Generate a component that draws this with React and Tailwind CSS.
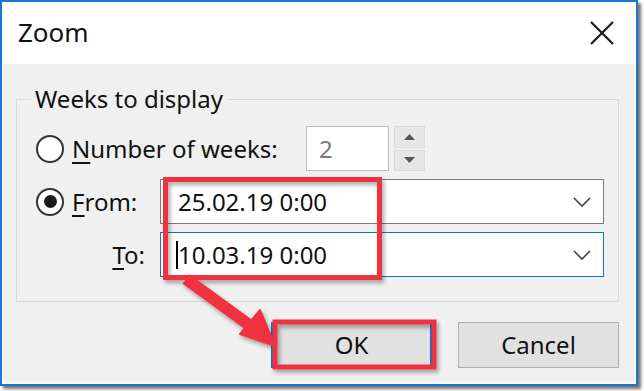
import React from 'react';

// small chevron used by the date combo boxes
function Chevron() {
  return (
    <svg width="20" height="12" viewBox="0 0 20 12" className="shrink-0">
      <polyline points="2,2 10,10 18,2" fill="none" stroke="#444" strokeWidth="1.6" />
    </svg>
  );
}

function Radio({ checked }) {
  return (
    <div className="w-[28px] h-[28px] rounded-full border-2 border-[#333] bg-white flex items-center justify-center shrink-0">
      {checked ? <div className="w-[13px] h-[13px] rounded-full bg-[#1a1a1a]" /> : null}
    </div>
  );
}

function Combo({ value, focused, caret }) {
  return (
    <div
      className={`flex-1 h-[45px] bg-white flex items-center pl-[17px] pr-[11px] border ${
        focused ? 'border-[#0078d7]' : 'border-[#7a7a7a]'
      }`}
    >
      {caret ? <div className="w-[2px] h-[28px] bg-black -ml-[2px]" /> : null}
      <span className="flex-1 text-[24px] leading-none text-[#111]">{value}</span>
      <Chevron />
    </div>
  );
}

export default function App() {
  return (
    <div className="w-[644px] h-[391px] bg-white relative" style={{ fontFamily: '"Noto Sans", "Open Sans", sans-serif' }}>
      {/* dialog window */}
      <div className="w-[638px] h-[386px] border-2 border-[#1979d2] bg-white flex flex-col pl-[1px] pr-[2px] pb-[2px] shadow-[3px_3px_3px_rgba(0,0,0,0.55)]">
        {/* title bar */}
        <div className="h-[62px] flex items-center justify-between pl-[15px] pr-[20px] shrink-0">
          <span className="text-[26px] text-[#111] leading-none -mt-[2px]">Zoom</span>
          <svg width="24" height="24" viewBox="0 0 24 24">
            <path d="M1 1 L23 23 M23 1 L1 23" stroke="#1a1a1a" strokeWidth="2.2" />
          </svg>
        </div>

        {/* body */}
        <div className="flex-1 bg-[#f0f0f0] flex flex-col pt-[22px] pl-[13px] pr-[15px]">
          <fieldset className="border border-[#d9d9d9]">
            <legend className="ml-[14px] px-[4px] text-[24px] leading-[26px] text-[#111]">Weeks to display</legend>
            <div className="flex flex-col gap-[8px] pt-[14px] pl-[19px] pr-[14px] pb-[24px]">
              {/* number of weeks */}
              <div className="flex items-center h-[45px]">
                <Radio />
                <span className="ml-[8px] w-[234px] text-[24px] leading-none text-[#111]">
                  <span className="underline underline-offset-[4px]">N</span>umber of weeks:
                </span>
                <div className="w-[83px] h-[45px] bg-white border border-[#bcbcbc] flex items-center pl-[12px] text-[24px] leading-none text-[#7a7a7a]">
                  2
                </div>
                <div className="ml-[5px] w-[31px] h-[45px] flex flex-col gap-[2px]">
                  <div className="flex-1 bg-[#e6e6e6] border border-[#dadada] flex items-center justify-center">
                    <svg width="11" height="6" viewBox="0 0 11 6"><polygon points="0,6 11,6 5.5,0" fill="#555" /></svg>
                  </div>
                  <div className="flex-1 bg-[#e6e6e6] border border-[#dadada] flex items-center justify-center">
                    <svg width="11" height="6" viewBox="0 0 11 6"><polygon points="0,0 11,0 5.5,6" fill="#555" /></svg>
                  </div>
                </div>
              </div>

              {/* from */}
              <div className="flex items-center h-[45px]">
                <div className="w-[124px] flex items-center shrink-0">
                  <Radio checked />
                  <span className="ml-[8px] text-[24px] leading-none text-[#111]">
                    <span className="underline underline-offset-[4px]">F</span>rom:
                  </span>
                </div>
                <Combo value="25.02.19 0:00" />
              </div>

              {/* to */}
              <div className="flex items-center h-[45px]">
                <div className="w-[124px] flex justify-end pr-[15px] shrink-0">
                  <span className="text-[24px] leading-none text-[#111]">
                    <span className="underline underline-offset-[4px]">T</span>o:
                  </span>
                </div>
                <Combo value="10.03.19 0:00" focused caret />
              </div>
            </div>
          </fieldset>

          {/* buttons */}
          <div className="flex justify-end gap-[26px] mt-[20px]">
            <div className="w-[161px] h-[46px] bg-[#e1e1e1] border-2 border-[#0078d7] flex items-center justify-center text-[24px] leading-none text-[#111]">
              OK
            </div>
            <div className="w-[161px] h-[46px] bg-[#e1e1e1] border border-[#adadad] flex items-center justify-center text-[24px] leading-none text-[#111]">
              Cancel
            </div>
          </div>
        </div>
      </div>

      {/* red annotation overlay */}
      <svg className="absolute left-0 top-0 pointer-events-none" width="644" height="391" viewBox="0 0 644 391">
        <defs>
          <filter id="shadow" x="-20%" y="-20%" width="140%" height="140%">
            <feDropShadow dx="2" dy="3" stdDeviation="2" floodColor="#000" floodOpacity="0.35" />
          </filter>
        </defs>
        <g filter="url(#shadow)" fill="none" stroke="#ef3340">
          <rect x="165.5" y="179.5" width="214" height="98" strokeWidth="5" />
          <rect x="275" y="322" width="159" height="45" strokeWidth="5" />
          <line x1="186" y1="279" x2="252" y2="327" strokeWidth="12" />
          <polygon points="240,334 260,310 275,346" fill="#ef3340" strokeWidth="2" strokeLinejoin="round" />
        </g>
      </svg>
    </div>
  );
}
